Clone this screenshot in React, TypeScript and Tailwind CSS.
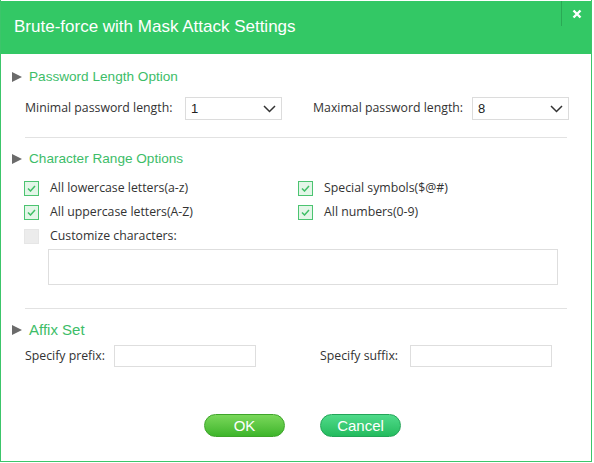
const label = "font-['Open_Sans',sans-serif] text-[12.3px] text-[#333]";

function Section({ title, className = '', size = 'text-[13.6px]' }: { title: string; className?: string; size?: string }) {
  return (
    <div className={`flex items-center h-[20px] pl-[11px] ${className}`}>
      <span className="w-0 h-0 border-y-[5.5px] border-y-transparent border-l-[10px] border-l-[#6b6b6b]" />
      <span className={`ml-[7px] font-['Liberation_Sans',Arial,sans-serif] ${size} text-[#3dbd68]`}>{title}</span>
    </div>
  );
}

function Select({ value }: { value: string }) {
  return (
    <div className="flex items-center justify-between w-[97px] h-[23px] border border-[#dcdcdc] bg-white pl-[5px] pr-[5px]">
      <span className="font-['Liberation_Sans',Arial,sans-serif] text-[13px] text-[#222]">{value}</span>
      <svg width="13" height="8" viewBox="0 0 13 8">
        <path d="M1 1 L6.5 6.5 L12 1" fill="none" stroke="#333" strokeWidth="1.5" />
      </svg>
    </div>
  );
}

function Check({ checked, text }: { checked: boolean; text: string }) {
  return (
    <div className="flex items-center h-[24px]">
      {checked ? (
        <span className="flex items-center justify-center w-[15px] h-[15px] border border-[#4cc471] bg-[#e3f6e8]">
          <svg width="9" height="7" viewBox="0 0 9 7">
            <path d="M1 3.5 L3.5 6 L8 1" fill="none" stroke="#3fbf66" strokeWidth="1.5" />
          </svg>
        </span>
      ) : (
        <span className="w-[15px] h-[15px] bg-[#ececec] border border-[#e6e6e6]" />
      )}
      <span className={`ml-[11px] ${label}`}>{text}</span>
    </div>
  );
}

export default function App() {
  return (
    <div className="w-[594px] h-[463px] bg-white">
      <div className="w-[592px] h-[462px] border border-[#3cc56a] border-t-0 flex flex-col">
        {/* title bar */}
        <div className="relative h-[53px] bg-[#33c865] flex items-center pl-[13px] mt-[1px]">
          <span className="font-['Liberation_Sans',Arial,sans-serif] text-[17px] text-white pb-[2px]">
            Brute-force with Mask Attack Settings
          </span>
          <div className="absolute right-0 top-0 w-[30px] h-[25px] border-l border-[#2aa955] flex items-center justify-center">
            <svg width="10" height="10" viewBox="0 0 10 10">
              <path d="M1.5 1.5 L8.5 8.5 M8.5 1.5 L1.5 8.5" stroke="white" strokeWidth="2.4" />
            </svg>
          </div>
        </div>

        <Section title="Password Length Option" className="mt-[13px]" />
        <div className="flex items-center mt-[10px] pl-[24px]">
          <span className={`${label} w-[160px]`}>Minimal password length:</span>
          <Select value="1" />
          <span className={`${label} ml-[31px] w-[159px]`}>Maximal password length:</span>
          <Select value="8" />
        </div>
        <div className="mx-[24px] mt-[17px] border-t border-[#e2e2e2]" />

        <Section title="Character Range Options" className="mt-[11px]" />
        <div className="pl-[23px] mt-[7px] flex">
          <div className="w-[274px]">
            <Check checked text="All lowercase letters(a-z)" />
            <Check checked text="All uppercase letters(A-Z)" />
            <Check checked={false} text="Customize characters:" />
          </div>
          <div>
            <Check checked text="Special symbols($@#)" />
            <Check checked text="All numbers(0-9)" />
          </div>
        </div>
        <div className="ml-[47px] mt-[1px] w-[510px] h-[36px] border border-[#dedede]" />
        <div className="mx-[24px] mt-[23px] border-t border-[#e2e2e2]" />

        <Section title="Affix Set" className="mt-[11px]" size="text-[15px]" />
        <div className="flex items-center mt-[5px] pl-[24px]">
          <span className={`${label} w-[89px]`}>Specify prefix:</span>
          <div className="w-[142px] h-[22px] border border-[#dedede]" />
          <span className={`${label} ml-[64px] w-[90px]`}>Specify suffix:</span>
          <div className="w-[142px] h-[22px] border border-[#dedede]" />
        </div>

        <div className="flex mt-[47px] pl-[203px] gap-[35px]">
          <button className="w-[81px] h-[23px] rounded-full border border-[#3ea52a] bg-gradient-to-b from-[#79d85a] to-[#3db52a] text-white font-['Liberation_Sans',Arial,sans-serif] text-[15px] leading-none">
            OK
          </button>
          <button className="w-[81px] h-[23px] rounded-full border border-[#23a558] bg-gradient-to-b from-[#4fdb8a] to-[#22bb5e] text-white font-['Liberation_Sans',Arial,sans-serif] text-[15px] leading-none">
            Cancel
          </button>
        </div>
      </div>
    </div>
  );
}
